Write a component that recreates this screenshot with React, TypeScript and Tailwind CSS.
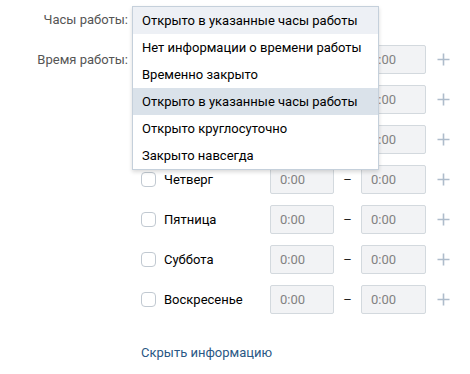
const days = [
  "Понедельник",
  "Вторник",
  "Среда",
  "Четверг",
  "Пятница",
  "Суббота",
  "Воскресенье",
];

const options = [
  { label: "Открыто в указанные часы работы", bg: "bg-[#edf0f5]" },
  { label: "Нет информации о времени работы", bg: "" },
  { label: "Временно закрыто", bg: "" },
  { label: "Открыто в указанные часы работы", bg: "bg-[#dae2ea]" },
  { label: "Открыто круглосуточно", bg: "" },
  { label: "Закрыто навсегда", bg: "" },
];

const Plus = () => (
  <svg width="13" height="13" viewBox="0 0 13 13" className="block">
    <path d="M6.5 0.5v12M0.5 6.5h12" stroke="#aebccb" strokeWidth="1.6" fill="none" />
  </svg>
);

export default function App() {
  return (
    <div className="w-[470px] h-[374px] bg-white text-[13px] leading-4 text-black font-['Roboto','Liberation_Sans',sans-serif] pt-[6px]">
      {/* Часы работы */}
      <div className="flex items-center h-[28px]">
        <div className="w-[128px] text-right text-[#555]">Часы работы:</div>
        <div className="relative ml-[4px] w-[247px] h-[28px]">
          <div className="absolute left-0 top-0 w-[247px] bg-white border border-[#c5d0db] shadow-[0_2px_4px_rgba(0,0,0,0.15)] z-10">
            {options.map((o, i) => (
              <div key={i} className={`h-[27px] flex items-center pl-[9px] ${o.bg}`}>
                {o.label}
              </div>
            ))}
          </div>
        </div>
      </div>

      {/* Время работы */}
      <div className="flex mt-[11px]">
        <div className="w-[128px] text-right text-[#555] h-[29px] flex items-center justify-end">Время работы:</div>
        <div className="ml-[13px] flex flex-col gap-[11px]">
          {days.map((d) => (
            <div key={d} className="flex items-center h-[29px]">
              <div className="w-[15px] h-[15px] border border-[#c1c9d1] rounded-[4px] bg-white" />
              <div className="ml-[8px] w-[106px]">{d}</div>
              <div className="w-[64px] h-[29px] bg-[#f2f3f5] border border-[#d3d9de] rounded-[2px] flex items-center pl-[9px] text-[#828282]">
                0:00
              </div>
              <div className="w-[27px] text-center text-[#222]">–</div>
              <div className="w-[65px] h-[29px] bg-[#f2f3f5] border border-[#d3d9de] rounded-[2px] flex items-center pl-[9px] text-[#828282]">
                0:00
              </div>
              <div className="ml-[11px]">
                <Plus />
              </div>
            </div>
          ))}
          <div className="mt-[20px] text-[#2a5885]">Скрыть информацию</div>
        </div>
      </div>
    </div>
  );
}
